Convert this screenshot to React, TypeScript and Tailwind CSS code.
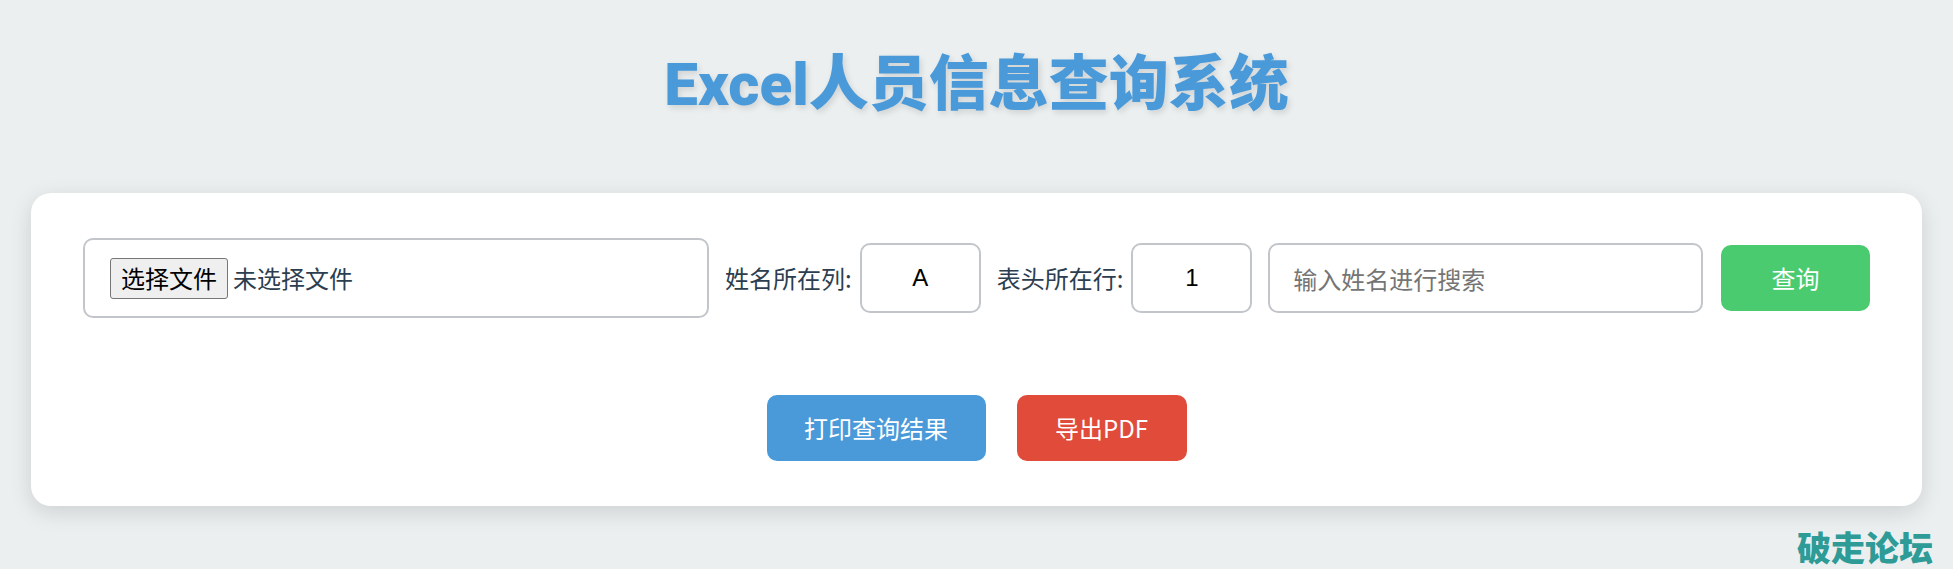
import React from "react";

const labelCls = "text-[24px] leading-none text-[#2c3e50] font-['Noto_Sans_CJK_SC','Liberation_Sans',sans-serif]";
const smallInputCls =
  "h-[70px] w-[121px] rounded-[10px] border-2 border-[#c2c6ca] text-center text-[24px] text-black outline-none font-['Liberation_Sans','Noto_Sans_CJK_SC',sans-serif]";

export default function App() {
  return (
    <div className="relative min-h-[569px] w-full overflow-hidden bg-[#ebeff0] font-['Liberation_Sans','Noto_Sans_CJK_SC',sans-serif]">
      <div className="flex h-[170px] items-center justify-center">
        <h1 className="text-[60px] font-black leading-none text-[#4a9ad9] [text-shadow:2px_3px_6px_rgba(0,0,0,0.12)] font-['Roboto','Noto_Sans_CJK_SC',sans-serif]">
          Excel人员信息查询系统
        </h1>
      </div>

      <div className="mx-[31px] mt-[23px] rounded-[20px] bg-white px-[52px] pb-[45px] pt-[45px] shadow-[0_6px_22px_rgba(0,0,0,0.13)]">
        <div className="flex items-center gap-[16px]">
          <label className="flex h-[80px] w-[626px] shrink-0 items-center rounded-[10px] border-2 border-[#c2c6ca] pl-[25px]">
            <span className="flex h-[41px] items-center rounded-[3px] border border-[#767676] bg-[#efefef] px-[10px] text-[24px] leading-none text-black font-['Noto_Sans_CJK_SC',sans-serif]">
              选择文件
            </span>
            <span className={`ml-[5px] ${labelCls}`}>未选择文件</span>
          </label>

          <div className="flex items-center gap-[8px]">
            <span className={labelCls}>姓名所在列:</span>
            <input readOnly value="A" className={smallInputCls} />
          </div>

          <div className="flex items-center gap-[8px]">
            <span className={labelCls}>表头所在行:</span>
            <input readOnly value="1" className={smallInputCls} />
          </div>

          <input
            placeholder="输入姓名进行搜索"
            className="h-[70px] min-w-0 flex-1 rounded-[10px] border-2 border-[#c2c6ca] px-[23px] text-[24px] text-black outline-none placeholder:text-[#757575] font-['Noto_Sans_CJK_SC',sans-serif]"
          />

          <button className="ml-[2px] h-[66px] w-[149px] shrink-0 rounded-[10px] bg-[#4acb6f] text-[24px] text-white font-['Noto_Sans_CJK_SC',sans-serif]">
            查询
          </button>
        </div>

        <div className="mt-[77px] flex items-center justify-center gap-[31px]">
          <button className="h-[66px] w-[219px] rounded-[10px] bg-[#4a9ad9] text-[24px] text-white font-['Noto_Sans_CJK_SC',sans-serif]">
            打印查询结果
          </button>
          <button className="h-[66px] w-[170px] rounded-[10px] bg-[#e04b3a] text-[24px] text-white font-['Noto_Sans_CJK_SC',sans-serif]">
            导出PDF
          </button>
        </div>
      </div>

      <div className="absolute bottom-[3px] right-[20px] text-[34px] font-black leading-[38px] text-[#2e9b97] font-['Noto_Sans_CJK_SC',sans-serif]">
        破走论坛
      </div>
    </div>
  );
}
